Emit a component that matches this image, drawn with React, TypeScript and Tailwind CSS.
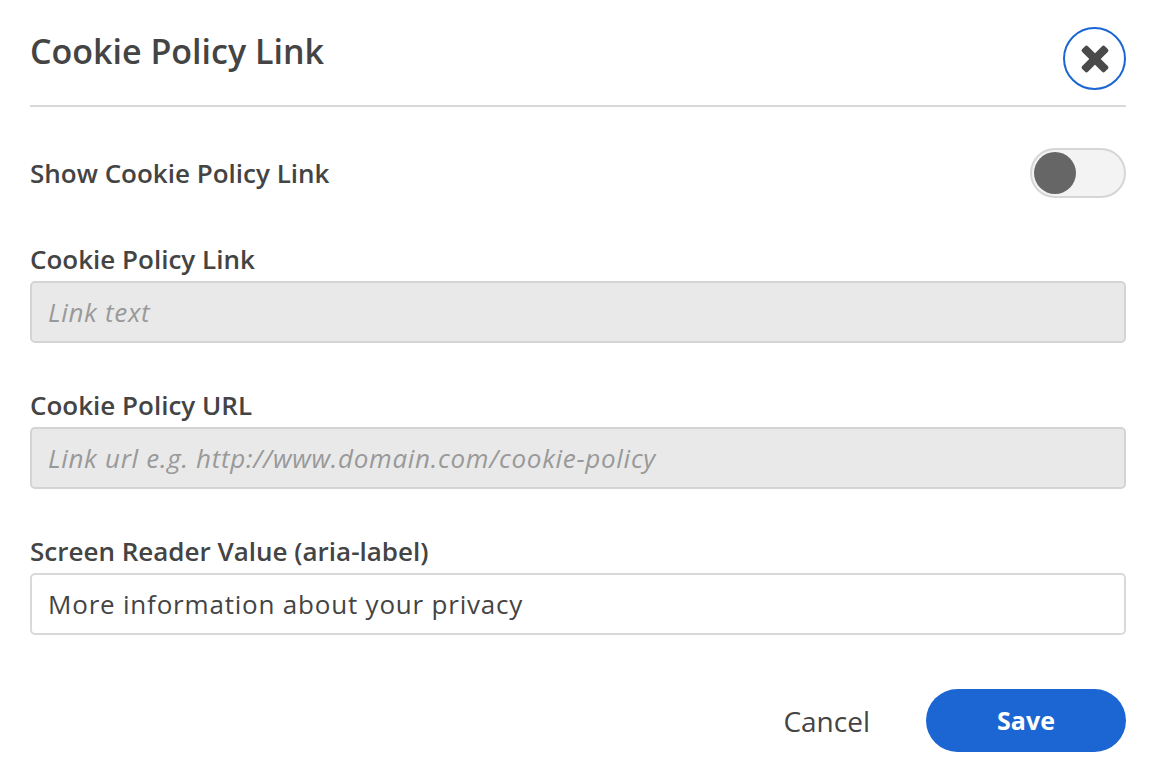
import { useState } from 'react';

const font = { fontFamily: '"Open Sans", Lato, sans-serif' };

const Field = ({
  label,
  placeholder,
  value,
  disabled,
}: {
  label: string;
  placeholder?: string;
  value?: string;
  disabled?: boolean;
}) => (
  <div className="flex flex-col">
    <label className="h-[30px] leading-[30px] text-[26px] font-semibold text-[#444]">{label}</label>
    <input
      className={
        'mt-[7px] h-[62px] w-full rounded-[5px] border-2 px-[16px] text-[26px] outline-none ' +
        (disabled
          ? 'border-[#d4d4d4] bg-[#e9e9e9] italic tracking-[0.7px] placeholder:text-[#999]'
          : 'border-[#d9d9d9] bg-white tracking-[0.8px] text-[#444]')
      }
      style={font}
      placeholder={placeholder}
      defaultValue={value}
      disabled={disabled}
    />
  </div>
);

export default function App() {
  const [on, setOn] = useState(false);

  return (
    <div className="h-[772px] w-[1152px] overflow-hidden bg-white pl-[30px] pr-[26px]" style={font}>
      <div className="flex h-[107px] items-start justify-between border-b-2 border-[#d9d9d9]">
        <h1 className="mt-[32px] text-[34px] leading-[38px] font-semibold text-[#444]">Cookie Policy Link</h1>
        <button className="mt-[27px] flex size-[63px] items-center justify-center rounded-full border-2 border-[#1b66d2] bg-white">
          <svg width="28" height="28" viewBox="0 0 28 28">
            <g fill="#4a4a4a" transform="rotate(45 14 14)">
              <rect x="10" y="-2" width="8" height="32" rx="2" />
              <rect x="-2" y="10" width="32" height="8" rx="2" />
            </g>
          </svg>
        </button>
      </div>

      <div className="mt-[41px] flex items-center justify-between">
        <span className="text-[26px] font-semibold text-[#444]">Show Cookie Policy Link</span>
        <button
          onClick={() => setOn(!on)}
          className={
            'flex h-[50px] w-[96px] items-center rounded-full border-2 border-[#d6d6d6] bg-[#f3f3f3] px-[2px] ' +
            (on ? 'justify-end' : 'justify-start')
          }
        >
          <span className="size-[42px] rounded-full bg-[#666]" />
        </button>
      </div>

      <div className="mt-[46px] flex flex-col gap-[47px]">
        <Field label="Cookie Policy Link" placeholder="Link text" disabled />
        <Field label="Cookie Policy URL" placeholder="Link url e.g. http://www.domain.com/cookie-policy" disabled />
        <Field label="Screen Reader Value (aria-label)" value="More information about your privacy" />
      </div>

      <div className="mt-[54px] flex items-center justify-end gap-[56px]">
        <button className="text-[28px] text-[#444]">Cancel</button>
        <button className="h-[63px] w-[200px] rounded-full bg-[#1b66d2] text-[25px] font-bold text-white">Save</button>
      </div>
    </div>
  );
}
